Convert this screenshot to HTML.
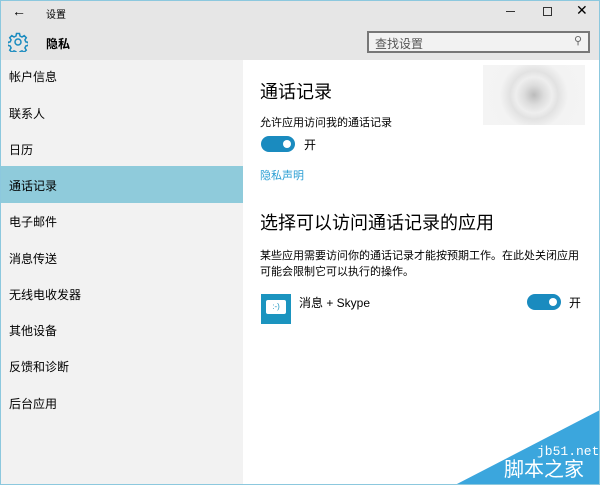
<!DOCTYPE html><html><head><meta charset="utf-8"><style>
*{margin:0;padding:0;box-sizing:border-box}
body{width:600px;height:485px;overflow:hidden;font-family:"Liberation Sans","Noto Sans CJK SC",sans-serif;color:#000;background:#fff;position:relative}
.top{position:absolute;left:0;top:0;width:600px;height:60px;background:#e6e6e6;border-top:1px solid #8cc8de}
.side{position:absolute;left:0;top:60px;width:243px;height:425px;background:#f2f2f2}
.item{position:absolute;left:9px;font-size:12px}
.sel{position:absolute;left:0;top:166px;width:243px;height:37px;background:#8fcbdb}
.abs{position:absolute}
.tog{position:absolute;width:34px;height:16px;border-radius:8px;background:#1a8bbf}
.tog:after{content:"";position:absolute;right:4px;top:4px;width:8px;height:8px;border-radius:50%;background:#fff}
</style></head><body>
<div class="top"></div>
<div class="abs" style="left:12px;top:3px;font-size:14px">←</div>
<div class="abs" style="left:46px;top:6px;font-size:10px">设置</div>
<div class="abs" style="left:506px;top:11px;width:9px;height:1px;background:#333"></div>
<div class="abs" style="left:543px;top:7px;width:9px;height:9px;border:1px solid #333"></div>
<div class="abs" style="left:576px;top:2px;font-size:14px">✕</div>
<svg class="abs" style="left:8px;top:32px" width="20" height="20" viewBox="0 0 20 20"><g fill="none" stroke="#1a8bbf" stroke-width="1.5"><circle cx="10" cy="10" r="3"/><path d="M8.5 1.5h3l.5 2.5 2 1 2.2-1.4 2.1 2.1-1.4 2.2 1 2 2.5.5v3l-2.5.5-1 2 1.4 2.2-2.1 2.1-2.2-1.4-2 1-.5 2.5h-3l-.5-2.5-2-1-2.2 1.4-2.1-2.1 1.4-2.2-1-2-2.5-.5v-3l2.5-.5 1-2-1.4-2.2 2.1-2.1 2.2 1.4 2-1z"/></g></svg>
<div class="abs" style="left:46px;top:35px;font-size:12px;font-weight:bold">隐私</div>
<div class="abs" style="left:367px;top:31px;width:223px;height:22px;border:2px solid #777;background:#f2f2f2"></div>
<div class="abs" style="left:375px;top:35px;font-size:12px;color:#555">查找设置</div>
<div class="abs" style="left:574px;top:34px;font-size:11px;color:#666">⚲</div>
<div class="side"></div>
<div class="sel"></div>
<div class="item" style="top:68px">帐户信息</div>
<div class="item" style="top:105px">联系人</div>
<div class="item" style="top:141px">日历</div>
<div class="item" style="top:177px">通话记录</div>
<div class="item" style="top:213px">电子邮件</div>
<div class="item" style="top:250px">消息传送</div>
<div class="item" style="top:286px">无线电收发器</div>
<div class="item" style="top:322px">其他设备</div>
<div class="item" style="top:358px">反馈和诊断</div>
<div class="item" style="top:395px">后台应用</div>
<div class="abs" style="left:483px;top:65px;width:102px;height:60px;background:radial-gradient(circle at 50% 50%,#bbb 0,#ddd 10px,#eee 18px,#e2e2e2 24px,#f3f3f3 34px,#f4f4f4 60px)"></div>
<div class="abs" style="left:260px;top:78px;font-size:18px">通话记录</div>
<div class="abs" style="left:260px;top:114px;font-size:11px">允许应用访问我的通话记录</div>
<div class="tog" style="left:261px;top:136px"></div>
<div class="abs" style="left:304px;top:136px;font-size:12px">开</div>
<div class="abs" style="left:260px;top:167px;font-size:11px;color:#2b9ed3">隐私声明</div>
<div class="abs" style="left:260px;top:209px;font-size:18px">选择可以访问通话记录的应用</div>
<div class="abs" style="left:260px;top:248px;font-size:11px;line-height:16px;width:322px">某些应用需要访问你的通话记录才能按预期工作。在此处关闭应用可能会限制它可以执行的操作。</div>
<div class="abs" style="left:261px;top:294px;width:30px;height:30px;background:#1b94bf"></div>
<div class="abs" style="left:266px;top:300px;width:20px;height:14px;background:#fff;border-radius:2px;font-size:8px;color:#1b94bf;text-align:center;line-height:14px">:-)</div>
<div class="abs" style="left:299px;top:294px;font-size:12px">消息 + Skype</div>
<div class="tog" style="left:527px;top:294px"></div>
<div class="abs" style="left:569px;top:294px;font-size:12px">开</div>
<svg class="abs" style="left:455px;top:410px" width="145" height="75"><polygon points="145,0 145,75 0,75" fill="#3ba6dd"/></svg>
<div class="abs" style="left:537px;top:444px;font-size:13px;color:#fff;font-family:'Liberation Mono',monospace">jb51.net</div>
<div class="abs" style="left:504px;top:458px;font-size:20px;color:#fff;line-height:24px">脚本之家</div>
<div class="abs" style="left:0;top:0;width:600px;height:485px;border:1px solid #8cc8de;border-top:none"></div>
</body></html>
